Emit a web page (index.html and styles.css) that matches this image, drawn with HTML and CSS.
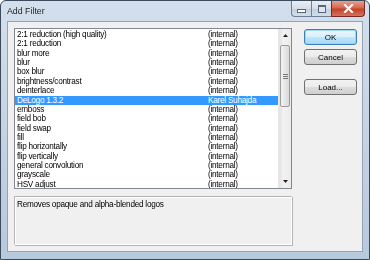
FILE: index.html
```html
<!DOCTYPE html>
<html lang="en">
<head>
  <meta charset="UTF-8" />
  <title>Add Filter</title>
  <link rel="stylesheet" href="styles.css">
</head>
<body>

<div class="window">
  <div class="titlebar">
    <span class="title">Add Filter</span>
    <div class="caption-buttons">
      <span class="cap cap-min"><i class="min-glyph"></i></span>
      <span class="cap cap-max"><i class="max-glyph"></i></span>
      <span class="cap cap-close">
        <svg width="11" height="9" viewBox="0 0 11 9"><path d="M2 1 L9 8 M9 1 L2 8" stroke="#fff" stroke-width="2.2" stroke-linecap="square"/></svg>
      </span>
    </div>
  </div>

  <div class="client">
    <div class="left-col">
      <div class="listbox">
        <div class="rows" id="rows"></div>
        <div class="scrollbar">
          <div class="sb-arrow">
            <svg width="5" height="3" viewBox="0 0 5 3"><path d="M0 3 L2.5 0 L5 3 Z" fill="#222"/></svg>
          </div>
          <div class="sb-track">
            <div class="sb-thumb"><i class="grip"></i></div>
          </div>
          <div class="sb-arrow">
            <svg width="5" height="3" viewBox="0 0 5 3"><path d="M0 0 L2.5 3 L5 0 Z" fill="#222"/></svg>
          </div>
        </div>
      </div>
      <div class="desc"><span class="txt">Removes opaque and alpha-blended logos</span></div>
    </div>

    <div class="right-col">
      <button class="btn btn-default"><span class="txt">OK</span></button>
      <button class="btn"><span class="txt">Cancel</span></button>
      <button class="btn btn-load"><span class="txt">Load...</span></button>
    </div>
  </div>
</div>

<script>
const filtry = [
  ["2:1 reduction (high quality)", "(internal)"],
  ["2:1 reduction", "(internal)"],
  ["blur more", "(internal)"],
  ["blur", "(internal)"],
  ["box blur", "(internal)"],
  ["brightness/contrast", "(internal)"],
  ["deinterlace", "(internal)"],
  ["DeLogo 1.3.2", "Karel Suhajda", true],
  ["emboss", "(internal)"],
  ["field bob", "(internal)"],
  ["field swap", "(internal)"],
  ["fill", "(internal)"],
  ["flip horizontally", "(internal)"],
  ["flip vertically", "(internal)"],
  ["general convolution", "(internal)"],
  ["grayscale", "(internal)"],
  ["HSV adjust", "(internal)"]
];

const rowsDiv = document.getElementById("rows");
filtry.forEach(f => {
  const row = document.createElement("div");
  row.classList.add("row");
  if (f[2]) row.classList.add("selected");
  row.innerHTML = `<span class="name">${f[0]}</span><span class="author">${f[1]}</span>`;
  rowsDiv.appendChild(row);
});
</script>

</body>
</html>
```

FILE: styles.css
```css
body { margin: 0; background: #fff; }
.window { width: 370px; height: 260px; box-sizing: border-box; display: flex; flex-direction: column; padding: 0 6px 7px 6px; border: 1px solid #3d4a5c; border-radius: 6px 6px 0 0; background: linear-gradient(180deg, #d3dfec 0%, #c8d5e4 40%, #b7c9dd 100%); font-family: 'Liberation Sans', Arial, sans-serif; }
.titlebar { height: 21px; display: flex; align-items: flex-start; justify-content: space-between; }
.title { font-family: 'Liberation Sans', Arial, sans-serif; font-size: 8.8px; color: #1e1e1e; padding: 5px 0 0 0; filter: grayscale(1); }
.caption-buttons { display: flex; margin-right: -2px; }
.cap { height: 16px; box-sizing: border-box; border: 1px solid #6f7f94; border-top: none; display: flex; align-items: center; justify-content: center; background: linear-gradient(180deg, #e9eef5 0%, #d5deea 50%, #c3cfdf 51%, #d3dde9 100%); }
.cap-min { width: 20px; border-radius: 0 0 0 4px; border-right: none; }
.cap-max { width: 20px; border-right: none; }
.cap-close { width: 34px; border-radius: 0 0 4px 0; border-color: #7a2a25; background: linear-gradient(180deg, #e8a093 0%, #d4694f 45%, #c2412a 55%, #d8735a 100%); }
.min-glyph { width: 7px; height: 2px; margin-top: 5px; background: #fff; border: 1px solid #55657a; }
.max-glyph { width: 6px; height: 5px; border: 1px solid #55657a; border-top-width: 2px; background: #dfe6ef; }
.client { flex: 1; display: flex; background: #f0f0f0; border: 1px solid #94a4b8; padding: 6px 7px 6px 6px; gap: 12px; }
.left-col { display: flex; flex-direction: column; gap: 7px; }
.listbox { width: 278px; height: 161px; box-sizing: border-box; border: 1px solid #828790; background: #fff; display: flex; }
.rows { flex: 1; padding-top: 1px; overflow: hidden; }
.row { height: 9.36px; line-height: 9.36px; font-size: 8.2px; letter-spacing: -0.25px; color: #000; display: flex; white-space: nowrap; }
.row .name { width: 191px; padding-left: 2px; }
.row:not(.selected) span { filter: grayscale(1); }
.row.selected { background: #3399ff; color: #fff; }
.scrollbar { width: 12px; display: flex; flex-direction: column; background: linear-gradient(90deg, #e3e3e3, #f2f2f2 40%, #ebebeb); border-left: 1px solid #e6e6e6; }
.sb-arrow { height: 13px; display: flex; align-items: center; justify-content: center; }
.sb-track { flex: 1; padding-top: 3px; }
.sb-thumb { height: 62px; margin: 0 1px; box-sizing: border-box; border: 1px solid #9b9b9b; border-radius: 2px; background: linear-gradient(90deg, #f3f3f3, #e6e6e6 50%, #d9d9d9); display: flex; align-items: center; justify-content: center; }
.grip { width: 5px; height: 5px; background: repeating-linear-gradient(180deg, #7a7a7a 0 1px, transparent 1px 2px); }
.desc { height: 49px; box-sizing: border-box; border: 1px solid #c9c9c9; border-color: #b5b5b5 #fff #fff #b5b5b5; box-shadow: inset 1px 1px 0 #fff, 1px 1px 0 #b5b5b5; padding: 3px 2px; font-size: 8.2px; letter-spacing: -0.25px; color: #000; }
.txt { display: inline-block; filter: grayscale(1); }
.right-col { display: flex; flex-direction: column; padding-top: 1px; }
.btn { width: 53px; height: 16px; margin-bottom: 4px; padding: 0; border: 1px solid #707070; border-radius: 3px; background: linear-gradient(180deg, #f2f2f2 0%, #ebebeb 50%, #dddddd 51%, #cfcfcf 100%); font-family: 'Liberation Sans', Arial, sans-serif; font-size: 8px; color: #000; }
.btn-default { border-color: #3c7fb1; box-shadow: inset 0 0 0 1px #9fd5f3; background: linear-gradient(180deg, #eaf6fd 0%, #d9f0fc 50%, #bee6fd 51%, #a7d9f5 100%); }
.btn-load { margin-top: 10px; }
```
